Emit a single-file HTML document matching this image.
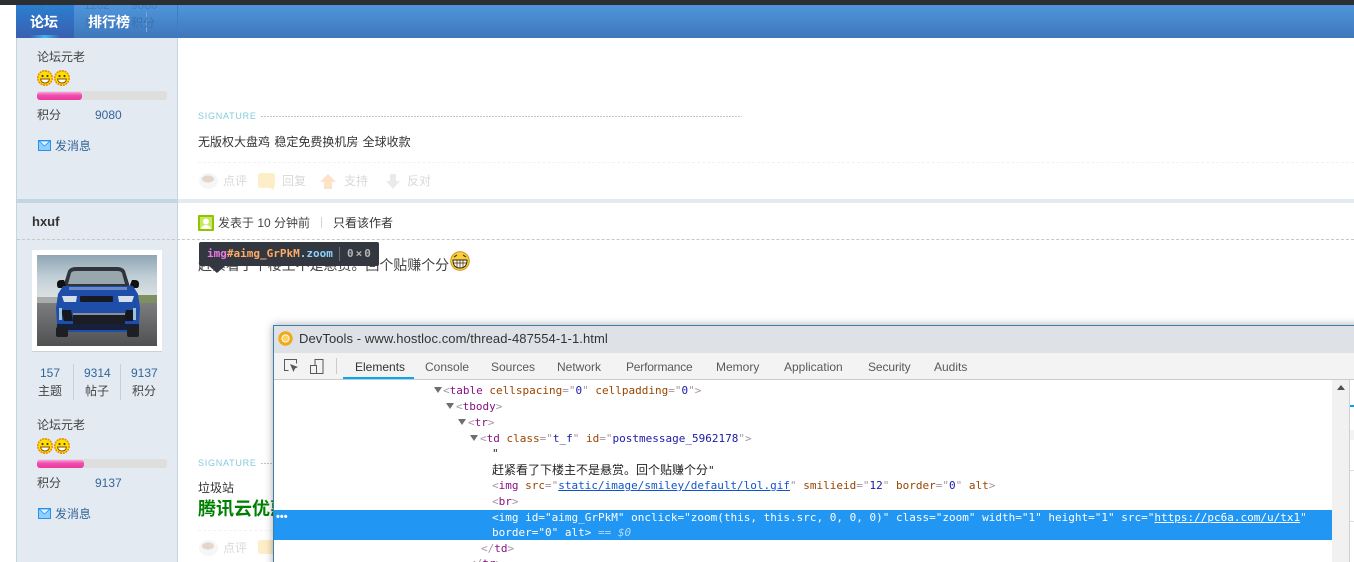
<!DOCTYPE html>
<html><head><meta charset="utf-8"><style>
html,body{margin:0;padding:0;background:#fff}
#p{position:relative;width:1354px;height:562px;overflow:hidden;background:#fff;font-family:"Liberation Sans","Noto Sans CJK SC",sans-serif;font-size:12px;color:#444}
.a{position:absolute}
.t{position:absolute;white-space:pre;line-height:16px;height:16px}
.f{color:#ccc;opacity:.75}
.b{color:#369}
.c{position:absolute;white-space:pre;font:11px/15px "DejaVu Sans Mono","Liberation Mono",monospace;color:#a894a6;height:15px}
.c i{font-style:normal;color:#881280}.c u{color:#994500;text-decoration:none}.c b{font-weight:normal;color:#1a1aa6}.c a{color:#1155cc;text-decoration:underline}
.tab{position:absolute;top:359px;font:12px/16px "Liberation Sans",sans-serif;color:#5a5a5a;white-space:pre}
.sel i,.sel u,.sel b{color:#fff}
.sg{position:absolute;font:9px/10px "Liberation Sans",sans-serif;letter-spacing:.75px;color:#85cbdc;white-space:pre}
.dl{position:absolute;height:1px;background:repeating-linear-gradient(90deg,#c4c4c4 0 2px,transparent 2px 3px)}
</style></head><body><div id="p">
<svg width="0" height="0" style="position:absolute"><defs>
<g id="sm"><circle cx="8" cy="8" r="7.2" fill="#fbe300" stroke="#f08a00" stroke-width="1.6" stroke-dasharray="2 .8"/><circle cx="5.5" cy="6" r="1.1" fill="#5a3a00"/><circle cx="10.5" cy="6" r="1.1" fill="#5a3a00"/><path d="M3.5 9h9c-.5 3-2.4 4-4.5 4s-4-1-4.5-4z" fill="#fff" stroke="#8a4a00" stroke-width=".9"/></g>
<g id="ml"><rect x=".5" y=".5" width="12" height="10" fill="#8fd0fa" stroke="#2a8ff0"/><path d="M1 1l5.5 5L12 1z" fill="#dff2ff" stroke="#2a8ff0" stroke-width=".8"/></g>
</defs></svg>

<div class="a" style="left:16px;top:38px;width:160px;height:161px;background:#e3eaf1;border:solid #c2d5e3;border-width:0 1px"></div>
<div class="a" style="left:16px;top:203px;width:160px;height:359px;background:#e3eaf1;border:solid #c2d5e3;border-width:0 1px"></div>
<div class="a" style="left:17px;top:199px;width:1337px;height:4px;background:#e3ebf2"></div>
<div class="a" style="left:16px;top:199px;width:162px;height:4px;background:#c2d5e3"></div>

<!-- header -->
<div class="a" style="left:16px;top:5px;width:1338px;height:33px;background:linear-gradient(#4f95dc,#3f77ba)"></div>
<div class="a" style="left:16px;top:5px;width:58px;height:33px;background:linear-gradient(#2a7fd0,#3a5fb0)"></div>
<div class="a" style="left:30px;top:35px;width:30px;height:3px;background:linear-gradient(90deg,transparent,#3fb4f5,transparent)"></div>
<div class="a" style="left:177px;top:5px;width:1px;height:33px;background:#3f7cc0"></div>
<div class="a" style="left:146px;top:12px;width:1px;height:20px;background:#7aa6d8"></div>
<div class="t" style="left:44px;top:-3px;color:#3f7fc4">27</div>
<div class="t" style="left:84px;top:-3px;color:#3f7fc4">1102</div>
<div class="t" style="left:131px;top:-3px;color:#3f7fc4">9080</div>
<div class="t" style="left:85px;top:15px;color:#3c74b4">帖子</div>
<div class="t" style="left:131px;top:15px;color:#3a72b2">积分</div>
<div class="t" style="left:30px;top:14px;color:#fff;font-size:14px;font-weight:bold">论坛</div>
<div class="t" style="left:88px;top:14px;color:#fff;font-size:14px;font-weight:bold">排行榜</div>
<div class="a" style="left:0;top:0;width:1354px;height:5px;background:#2c2f32"></div>

<!-- post 1 sidebar -->
<div class="t" style="left:37px;top:49px">论坛元老</div>
<svg class="a" style="left:37px;top:70px" width="33" height="16"><use href="#sm"/><use href="#sm" x="17"/></svg>
<div class="a" style="left:37px;top:91px;width:130px;height:9px;background:#dedede;border-radius:3px"></div>
<div class="a" style="left:37px;top:92px;width:45px;height:8px;background:linear-gradient(#f9a2d6,#f04fb0 40%,#e83a9e);border-radius:3px"></div>
<div class="t" style="left:37px;top:107px">积分</div>
<div class="t b" style="left:95px;top:107px">9080</div>
<svg class="a" style="left:38px;top:140px" width="13" height="11"><use href="#ml"/></svg>
<div class="t b" style="left:55px;top:138px">发消息</div>

<!-- post 1 body -->
<div class="sg" style="left:198px;top:111px">SIGNATURE</div>
<div class="dl" style="left:261px;top:116px;width:481px"></div>
<div class="t" style="left:198px;top:134px;color:#333;word-spacing:1px">无版权大盘鸡 稳定免费换机房 全球收款</div>
<div class="a" style="left:198px;top:162px;width:1156px;border-top:1px dashed #f2f2f2"></div>
<svg class="a" style="left:199px;top:172px;opacity:.3" width="205" height="18">
<ellipse cx="9.5" cy="9" rx="9.5" ry="8" fill="#e4e4e4"/><ellipse cx="9" cy="7" rx="6" ry="3.6" fill="#b07a52"/>
<path d="M62 1h11q3 0 3 3v8q0 2-1 3v3l-4-2H62q-3 0-3-3V4q0-3 3-3z" fill="#fbc94a"/>
<path d="M129 2l8 8h-4v7h-8v-7h-4z" fill="#fba04a"/>
<path d="M191 2h6v7h4l-7 8-7-8h4z" fill="#bbb"/></svg>
<div class="t f" style="left:223px;top:173px">点评</div>
<div class="t f" style="left:282px;top:173px">回复</div>
<div class="t f" style="left:344px;top:173px">支持</div>
<div class="t f" style="left:407px;top:173px">反对</div>

<!-- post 2 sidebar -->
<div class="t" style="left:32px;top:214px;font-size:13px;font-weight:bold;color:#333">hxuf</div>
<div class="a" style="left:17px;top:239px;width:1337px;border-top:1px dashed #c8c8c8"></div>
<div class="a" style="left:32px;top:250px;width:130px;height:101px;background:#fff;border-bottom:1px solid #d0d0d0"></div>
<svg class="a" style="left:37px;top:255px" width="120" height="91" viewBox="0 0 120 91">
<defs><linearGradient id="sky" x1="0" y1="0" x2="0" y2="1"><stop offset="0" stop-color="#8fa6b5"/><stop offset=".5" stop-color="#c3d0d8"/><stop offset="1" stop-color="#dfe4e4"/></linearGradient>
<linearGradient id="rd" x1="0" y1="0" x2="0" y2="1"><stop offset="0" stop-color="#7b7d7f"/><stop offset="1" stop-color="#4f5052"/></linearGradient></defs>
<rect width="120" height="46" fill="url(#sky)"/>
<rect x="0" y="42" width="30" height="6" fill="#a8acaa"/>
<rect x="90" y="40" width="30" height="11" fill="#7f8f62"/>
<rect y="48" width="120" height="43" fill="url(#rd)"/>
<path d="M26 32l5-16q2-4 8-4h41q6 0 8 4l5 16z" fill="#30353c"/>
<path d="M31 29l3-11q1-2 5-2h41q4 0 5 2l3 11z" fill="#98a6ae"/>
<path d="M20 29q0-4 4-4h3l2 5-2 3h-5q-2 0-2-4zM102 29q0-4-4-4h-3l-2 5 2 3h5q2 0 2-4z" fill="#111"/>
<path d="M26 31h70l5 8 2 14-1 16-6 8H26l-6-8-1-16 2-14z" fill="#1e4ea9"/>
<rect x="32" y="32" width="58" height="3" fill="#6b88c4"/>
<rect x="43" y="41" width="33" height="6" rx="1" fill="#171a20"/>
<path d="M25 41h15l-1 6H27z" fill="#d6deea"/><path d="M97 41H81l1 6h13z" fill="#d6deea"/>
<path d="M24 55h10l2 11H27z" fill="#14171d"/><path d="M99 55H89l-2 11h9z" fill="#14171d"/>
<rect x="22" y="53" width="3" height="12" fill="#9cc4d8"/><rect x="96" y="53" width="3" height="12" fill="#9cc4d8"/>
<rect x="36" y="60" width="52" height="10" fill="#1a1d24"/><rect x="36" y="58" width="52" height="2" fill="#8a8f98"/>
<rect x="20" y="69" width="82" height="6" fill="#17203a"/>
<rect x="19" y="72" width="12" height="10" rx="2" fill="#1d1f22"/><rect x="90" y="72" width="12" height="10" rx="2" fill="#1d1f22"/>
</svg>
<div class="a" style="left:73px;top:364px;width:1px;height:36px;background:#c8d0d6"></div>
<div class="a" style="left:120px;top:364px;width:1px;height:36px;background:#c8d0d6"></div>
<div class="t b" style="left:40px;top:365px">157</div>
<div class="t b" style="left:84px;top:365px">9314</div>
<div class="t b" style="left:131px;top:365px">9137</div>
<div class="t" style="left:38px;top:383px">主题</div>
<div class="t" style="left:85px;top:383px">帖子</div>
<div class="t" style="left:132px;top:383px">积分</div>
<div class="t" style="left:37px;top:417px">论坛元老</div>
<svg class="a" style="left:37px;top:438px" width="33" height="16"><use href="#sm"/><use href="#sm" x="17"/></svg>
<div class="a" style="left:37px;top:459px;width:130px;height:9px;background:#dedede;border-radius:3px"></div>
<div class="a" style="left:37px;top:460px;width:47px;height:8px;background:linear-gradient(#f9a2d6,#f04fb0 40%,#e83a9e);border-radius:3px"></div>
<div class="t" style="left:37px;top:475px">积分</div>
<div class="t b" style="left:95px;top:475px">9137</div>
<svg class="a" style="left:38px;top:508px" width="13" height="11"><use href="#ml"/></svg>
<div class="t b" style="left:55px;top:506px">发消息</div>

<!-- post 2 body -->
<svg class="a" style="left:198px;top:215px" width="16" height="16"><rect width="16" height="16" rx="1" fill="#8fc400"/><rect x="2" y="2" width="12" height="12" fill="#c8e860"/><circle cx="8" cy="6.5" r="3" fill="#fff"/><path d="M3 14q1-4 5-4t5 4z" fill="#fff"/></svg>
<div class="t" style="left:218px;top:215px">发表于 10 分钟前</div>
<div class="a" style="left:321px;top:217px;width:1px;height:11px;background:#c8d4de"></div>
<div class="t" style="left:333px;top:215px;color:#333">只看该作者</div>
<div class="t" style="left:198px;top:257px;font-size:14px;color:#444;letter-spacing:-.05px">赶紧看了下楼主不是悬赏。回个贴赚个分</div>
<svg class="a" style="left:450px;top:251px" width="20" height="20" viewBox="0 0 20 20"><circle cx="10" cy="10" r="9.3" fill="#f9cf3e" stroke="#c88a10" stroke-width=".8"/><path d="M4 6l3-2M16 6l-3-2" stroke="#5a3a00" stroke-width="1.2"/><path d="M3 9h14q0 8-7 8T3 9z" fill="#fff" stroke="#3a2600"/><path d="M3.5 12h13M7 9v7M10 9v8M13 9v7" stroke="#3a2600" stroke-width=".7"/></svg>
<div class="a" style="left:199px;top:242px;width:180px;height:24px;background:#333740;border-radius:2px"></div>
<div class="a" style="left:209px;top:266px;border:solid transparent;border-width:7px 8px 0;border-top-color:#333740;width:0;height:0"></div>
<div class="t" style="left:207px;top:246px;font:bold 11px/16px 'DejaVu Sans Mono',monospace"><span style="color:#ee78e6">img</span><span style="color:#ffab66">#aimg_GrPkM</span><span style="color:#8ed3fb">.zoom</span></div>
<div class="a" style="left:339px;top:247px;width:1px;height:14px;background:#6a6d74"></div>
<div class="t" style="left:347px;top:246px;font:bold 11px/16px 'DejaVu Sans Mono',monospace;color:#b4b4b4;letter-spacing:2px">0×0</div>

<div class="sg" style="left:198px;top:458px">SIGNATURE</div>
<div class="dl" style="left:261px;top:463px;width:14px"></div>
<div class="t" style="left:198px;top:480px;color:#333">垃圾站</div>
<div class="t" style="left:198px;top:498px;font-size:18px;line-height:22px;height:22px;font-weight:bold;color:#008000">腾讯云优惠</div>
<div class="a" style="left:198px;top:530px;width:80px;border-top:1px dashed #f2f2f2"></div>
<svg class="a" style="left:199px;top:539px;opacity:.3" width="80" height="18"><ellipse cx="9.5" cy="9" rx="9.5" ry="8" fill="#e4e4e4"/><ellipse cx="9" cy="7" rx="6" ry="3.6" fill="#b07a52"/><path d="M62 1h11q3 0 3 3v8q0 3-3 3H62q-3 0-3-3V4q0-3 3-3z" fill="#fbc94a"/></svg>
<div class="t f" style="left:223px;top:540px">点评</div>

<!-- devtools window -->
<div class="a" style="left:273px;top:325px;width:1090px;height:245px;background:#fff;border:solid #3a7fae;border-width:1px 0 0 1px;box-sizing:border-box;box-shadow:0 0 8px rgba(0,0,0,.35)"></div>
<div class="a" style="left:274px;top:326px;width:1080px;height:27px;background:#dee1e6"></div>
<svg class="a" style="left:278px;top:331px" width="15" height="15"><circle cx="7.5" cy="7.5" r="7.2" fill="#f2a81d"/><circle cx="7.5" cy="7.5" r="3.6" fill="#fbd25a" stroke="#fff" stroke-width="1"/></svg>
<div class="t" style="left:299px;top:331px;font-size:13px;color:#333;letter-spacing:.08px">DevTools - www.hostloc.com/thread-487554-1-1.html</div>
<div class="a" style="left:274px;top:353px;width:1080px;height:26px;background:#f3f3f3;border-bottom:1px solid #ccc"></div>
<svg class="a" style="left:283px;top:358px" width="45" height="17" fill="none" stroke="#5a5a5a"><path d="M13.5 5.5V1.5H1.5v11h4"/><path d="M7 6l8 3-3 1.5L10.5 14z" fill="#5a5a5a" stroke="none"/><rect x="32" y="1.5" width="8" height="14" /><rect x="27.5" y="7.5" width="6" height="8" fill="#f3f3f3"/></svg>
<div class="a" style="left:336px;top:358px;width:1px;height:16px;background:#ccc"></div>
<div class="tab" style="left:355px;color:#333">Elements</div>
<div class="a" style="left:343px;top:377px;width:71px;height:2px;background:#03a9f4"></div>
<div class="tab" style="left:425px">Console</div>
<div class="tab" style="left:491px">Sources</div>
<div class="tab" style="left:557px">Network</div>
<div class="tab" style="left:626px;letter-spacing:-.2px">Performance</div>
<div class="tab" style="left:716px">Memory</div>
<div class="tab" style="left:784px">Application</div>
<div class="tab" style="left:868px;letter-spacing:-.1px">Security</div>
<div class="tab" style="left:934px">Audits</div>
<div class="a" style="left:1332px;top:380px;width:17px;height:182px;background:#f1f1f1"></div>
<div class="a" style="left:1349px;top:380px;width:1px;height:182px;background:#d0d0d0"></div>
<div class="a" style="left:1337px;top:385px;border:solid transparent;border-width:0 4px 5px;border-bottom-color:#505050;width:0;height:0"></div>
<div class="a" style="left:1350px;top:405px;width:4px;height:2px;background:#00a4f0"></div>
<div class="a" style="left:1350px;top:430px;width:4px;height:10px;background:#f3f3f3"></div>
<div class="a" style="left:1350px;top:470px;width:4px;height:1px;background:#ddd"></div>
<div class="a" style="left:1350px;top:521px;width:4px;height:1px;background:#ddd"></div>

<div class="a" style="left:274px;top:510px;width:1058px;height:30px;background:#2196f3"></div>
<div class="t" style="left:276px;top:509px;color:#fff;font-size:11px;font-weight:bold">•••</div>

<div class="a" style="left:434px;top:387px;border:solid transparent;border-width:6px 4px 0;border-top-color:#6e6e6e"></div>
<div class="a" style="left:446px;top:403px;border:solid transparent;border-width:6px 4px 0;border-top-color:#6e6e6e"></div>
<div class="a" style="left:458px;top:419px;border:solid transparent;border-width:6px 4px 0;border-top-color:#6e6e6e"></div>
<div class="a" style="left:470px;top:435px;border:solid transparent;border-width:6px 4px 0;border-top-color:#6e6e6e"></div>

<div class="c" style="left:443px;top:383px">&lt;<i>table</i> <u>cellspacing</u>="<b>0</b>" <u>cellpadding</u>="<b>0</b>"&gt;</div>
<div class="c" style="left:456px;top:399px">&lt;<i>tbody</i>&gt;</div>
<div class="c" style="left:468px;top:415px">&lt;<i>tr</i>&gt;</div>
<div class="c" style="left:480px;top:431px">&lt;<i>td</i> <u>class</u>="<b>t_f</b>" <u>id</u>="<b>postmessage_5962178</b>"&gt;</div>
<div class="c" style="left:492px;top:446px;color:#222">"</div>
<div class="t" style="left:492px;top:462px;color:#222">赶紧看了下楼主不是悬赏。回个贴赚个分<span style="font-family:'DejaVu Sans Mono',monospace;font-size:11px">"</span></div>
<div class="c" style="left:492px;top:478px">&lt;<i>img</i> <u>src</u>="<a>static/image/smiley/default/lol.gif</a>" <u>smilieid</u>="<b>12</b>" <u>border</u>="<b>0</b>" <u>alt</u>&gt;</div>
<div class="c" style="left:492px;top:494px">&lt;<i>br</i>&gt;</div>
<div class="c sel" style="left:492px;top:510px;color:#fff">&lt;<i>img</i> <u>id</u>="<b>aimg_GrPkM</b>" <u>onclick</u>="<b>zoom(this, this.src, 0, 0, 0)</b>" <u>class</u>="<b>zoom</b>" <u>width</u>="<b>1</b>" <u>height</u>="<b>1</b>" <u>src</u>="<span style="text-decoration:underline">https://pc6a.com/u/tx1</span>"</div>
<div class="c sel" style="left:492px;top:525px;color:#fff">border="0" alt&gt; <span style="color:#b5dcfb">== <em>$0</em></span></div>
<div class="c" style="left:481px;top:541px">&lt;/<i>td</i>&gt;</div>
<div class="c" style="left:469px;top:556px">&lt;/<i>tr</i>&gt;</div>
</div></body></html>
